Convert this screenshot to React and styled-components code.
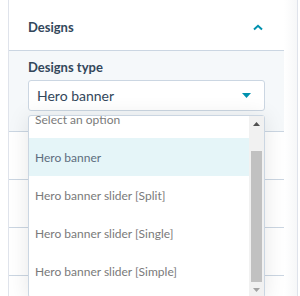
import React, { useLayoutEffect, useRef } from 'react';
import styled, { createGlobalStyle } from 'styled-components';

const GlobalStyle = createGlobalStyle`
  body {
    margin: 0;
    background: #ffffff;
    font-family: Lato, "Noto Sans", sans-serif;
    color: #33475b;
  }
`

const Page = styled.div`
  display: flex;
  width: 300px;
  height: 296px;
  overflow: hidden;
  padding-left: 8px;
  box-sizing: border-box;
`

const Panel = styled.div`
  position: relative;
  width: 276px;
  flex-shrink: 0;
  border-left: 1px solid #dfe3eb;
  box-sizing: border-box;
`

const Gutter = styled.div`
  width: 13px;
  flex-shrink: 0;
  background: linear-gradient(to right, #ffffff, #f6f7f8);
  border-right: 1px solid #dfe3eb;
`

const Header = styled.div`
  display: flex;
  align-items: center;
  justify-content: space-between;
  height: 46px;
  padding: 4px 21px 0 19px;
  border-bottom: 1px solid #cbd6e2;
`

const Title = styled.span`
  font-size: 13px;
  font-weight: 700;
  color: #33475b;
`

const Body = styled.div`
  display: flex;
  flex-direction: column;
  gap: 4px;
  padding: 7px 19px 20px;
  background: #f5f8fa;
  border-bottom: 1px solid #cbd6e2;
`

const Label = styled.label`
  font-size: 13px;
  font-weight: 700;
  line-height: 18px;
  color: #33475b;
`

const SelectWrap = styled.div`
  position: relative;
`

const SelectBox = styled.div`
  display: flex;
  align-items: center;
  justify-content: space-between;
  height: 29px;
  padding: 0 13px 0 8px;
  background: #ffffff;
  border: 1px solid #cbd6e2;
  border-radius: 3px;
  font-size: 14px;
  color: #33475b;
`

const Dropdown = styled.div`
  position: absolute;
  top: calc(100% + 4px);
  left: 0;
  z-index: 3;
  display: flex;
  width: 100%;
  height: 183px;
  box-sizing: border-box;
  background: #ffffff;
  border: 1px solid #cbd6e2;
  border-radius: 3px;
  box-shadow: 0 2px 22px rgba(0, 0, 0, 0.1);
`

const Viewport = styled.ul`
  flex: 1;
  margin: 0;
  padding: 0 0 7px;
  list-style: none;
  overflow: hidden;
`

const Option = styled.li`
  display: flex;
  align-items: center;
  height: 38px;
  padding-left: 6px;
  font-size: 12px;
  color: ${({ $active }) => ($active ? '#5d6d7e' : '#7a7a7a')};
  background: ${({ $active }) => ($active ? '#e5f5f8' : 'transparent')};
`

const ScrollBar = styled.div`
  display: flex;
  flex-direction: column;
  width: 15px;
  flex-shrink: 0;
  background: #f1f1f1;
`

const ScrollButton = styled.div`
  display: flex;
  align-items: center;
  justify-content: center;
  height: 15px;
  flex-shrink: 0;
`

const Track = styled.div`
  flex: 1;
  display: flex;
  flex-direction: column;
  justify-content: flex-end;
  padding: 0 2px;
`

const Thumb = styled.div`
  height: 131px;
  background: #c1c1c1;
`

const Row = styled.div`
  height: 47px;
  border-bottom: 1px solid #cbd6e2;
`

const options = [
  'Select an option',
  'Hero banner',
  'Hero banner slider [Split]',
  'Hero banner slider [Single]',
  'Hero banner slider [Simple]',
]

const ChevronUp = () => (
  <svg width="10" height="7" viewBox="0 0 10 7">
    <path d="M1 5.5 L5 1.8 L9 5.5" fill="none" stroke="#0091ae" strokeWidth="2" />
  </svg>
)

const Caret = () => (
  <svg width="9" height="5" viewBox="0 0 9 5">
    <path d="M0 0 H9 L4.5 5 Z" fill="#0091ae" />
  </svg>
)

const Arrow = ({ up, color }) => (
  <svg width="7" height="4" viewBox="0 0 7 4">
    <path d={up ? 'M0 4 H7 L3.5 0 Z' : 'M0 0 H7 L3.5 4 Z'} fill={color} />
  </svg>
)

const App = () => {
  const listRef = useRef(null)

  useLayoutEffect(() => {
    if (listRef.current) listRef.current.scrollTop = 16
  }, [])

  return (
    <Page>
      <GlobalStyle />
      <Panel>
        <Header>
          <Title>Designs</Title>
          <ChevronUp />
        </Header>
        <Body>
          <Label>Designs type</Label>
          <SelectWrap>
            <SelectBox>
              <span>Hero banner</span>
              <Caret />
            </SelectBox>
            <Dropdown>
              <Viewport ref={listRef}>
                {options.map((name) => (
                  <Option key={name} $active={name === 'Hero banner'}>{name}</Option>
                ))}
              </Viewport>
              <ScrollBar>
                <ScrollButton><Arrow up color="#505050" /></ScrollButton>
                <Track><Thumb /></Track>
                <ScrollButton><Arrow color="#a3a3a3" /></ScrollButton>
              </ScrollBar>
            </Dropdown>
          </SelectWrap>
        </Body>
        <Row />
        <Row />
        <Row />
        <Row />
      </Panel>
      <Gutter />
    </Page>
  )
}

export default App;
